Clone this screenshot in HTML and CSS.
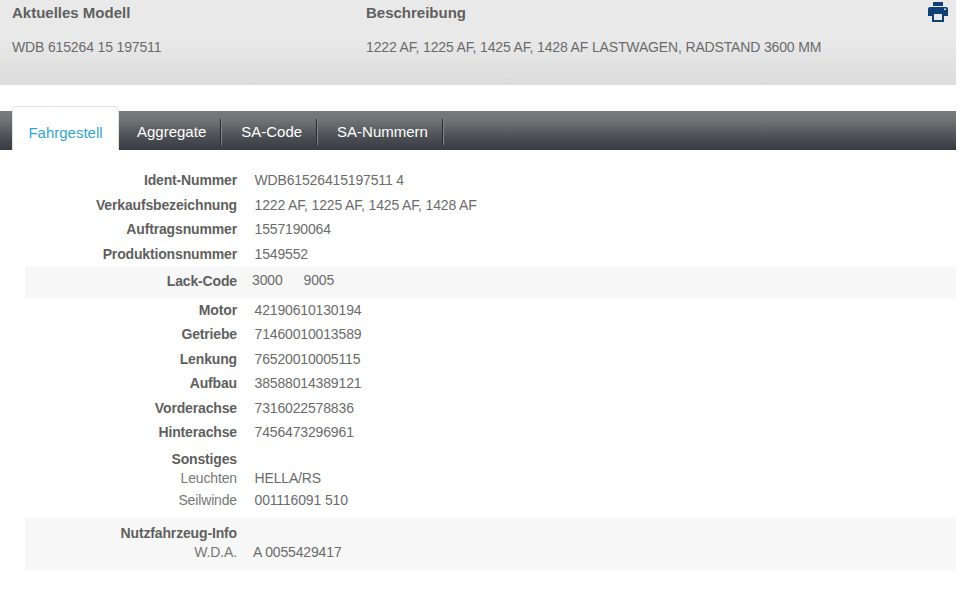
FILE: index.html
```html
<!DOCTYPE html>
<html lang="de">
<head>
<meta charset="utf-8">
<title>Fahrgestell</title>
<link rel="stylesheet" href="styles.css">
</head>
<body>
<div class="page">
  <header class="summary">
    <div class="col-model">
      <div class="sum-head">Aktuelles Modell</div>
      <div class="sum-val">WDB 615264 15 197511</div>
    </div>
    <div class="col-desc">
      <div class="sum-head">Beschreibung</div>
      <div class="sum-val">1222 AF, 1225 AF, 1425 AF, 1428 AF LASTWAGEN, RADSTAND 3600 MM</div>
    </div>
    <svg class="print" width="20" height="20" viewBox="0 0 20 20" aria-label="Drucken">
      <path fill="#0f3f73" d="M5 0h10v4H5z"/>
      <path fill="#0f3f73" d="M2 5h16a2 2 0 0 1 2 2v7h-4v-4H4v4H0V7a2 2 0 0 1 2-2z"/>
      <path fill="#0f3f73" d="M4 10h12v10H4z"/>
      <path fill="#e6e9ec" d="M6 12h8v6H6z"/>
      <path fill="#dfe5ea" d="M16 6.500h2V8h-2z"/>
    </svg>
  </header>

  <nav class="tabs">
    <a class="tab active">Fahrgestell</a>
    <a class="tab">Aggregate</a>
    <a class="tab">SA-Code</a>
    <a class="tab">SA-Nummern</a>
  </nav>

  <main class="details">
    <div class="group">
      <div class="row"><span class="k">Ident-Nummer</span><span class="v">WDB61526415197511 4</span></div>
      <div class="row"><span class="k">Verkaufsbezeichnung</span><span class="v">1222 AF, 1225 AF, 1425 AF, 1428 AF</span></div>
      <div class="row"><span class="k">Auftragsnummer</span><span class="v">1557190064</span></div>
      <div class="row"><span class="k">Produktionsnummer</span><span class="v">1549552</span></div>
    </div>
    <div class="group band lack">
      <div class="row"><span class="k">Lack-Code</span><span class="v codes"><span>3000</span><span>9005</span></span></div>
    </div>
    <div class="group parts">
      <div class="row"><span class="k">Motor</span><span class="v">42190610130194</span></div>
      <div class="row"><span class="k">Getriebe</span><span class="v">71460010013589</span></div>
      <div class="row"><span class="k">Lenkung</span><span class="v">76520010005115</span></div>
      <div class="row"><span class="k">Aufbau</span><span class="v">38588014389121</span></div>
      <div class="row"><span class="k">Vorderachse</span><span class="v">7316022578836</span></div>
      <div class="row"><span class="k">Hinterachse</span><span class="v">7456473296961</span></div>
    </div>
    <div class="group other">
      <div class="row sub-head"><span class="k">Sonstiges</span></div>
      <div class="row sub first-sub"><span class="k">Leuchten</span><span class="v">HELLA/RS</span></div>
      <div class="row sub"><span class="k">Seilwinde</span><span class="v">001116091 510</span></div>
    </div>
    <div class="group band info">
      <div class="row sub-head"><span class="k">Nutzfahrzeug-Info</span></div>
      <div class="row sub first-sub"><span class="k">W.D.A.</span><span class="v">A 0055429417</span></div>
    </div>
  </main>
</div>
</body>
</html>
```
FILE: styles.css
```css
html, body {
  margin: 0;
  padding: 0;
  background: #fff;
}
body {
  font-family: "Liberation Sans", Arial, sans-serif;
  font-size: 14px;
  letter-spacing: -0.15px;
  color: #666;
  overflow: hidden;
}
.page {
  width: 956px;
  height: 615px;
}
.summary {
  display: flex;
  height: 85px;
  box-sizing: border-box;
  padding: 2px 8px 0 12px;
  background: linear-gradient(#e9e9e9 0%, #e9e9e9 45%, #dcdcdc 100%);
}
.col-model { width: 354px; }
.col-desc { flex: 1; }
.sum-head {
  font-size: 15px;
  letter-spacing: 0;
  font-weight: bold;
  line-height: 22px;
  color: #5f5f5f;
}
.sum-val {
  margin-top: 14px;
  line-height: 18px;
  color: #6b6b6b;
}
.print { flex: none; }

.tabs {
  display: flex;
  height: 39px;
  margin-top: 26px;
  padding-left: 12px;
  background: linear-gradient(#777b7e 0%, #6e7275 25%, #4a4d52 70%, #383b43 100%);
}
.tab {
  position: relative;
  display: flex;
  align-items: center;
  padding: 2px 15px 0 18px;
  font-size: 15px;
  letter-spacing: 0;
  color: #fff;
  line-height: 37px;
  white-space: nowrap;
}
.tab::after {
  content: "";
  position: absolute;
  right: 0;
  top: 8px;
  bottom: 5px;
  width: 1px;
  background: #26282c;
  box-shadow: 1px 0 0 #85888b;
}
.tab:nth-child(3),
.tab:nth-child(4) { padding-left: 20px; }
.tab.active {
  height: 44px;
  margin-top: -5px;
  box-sizing: border-box;
  width: 107px;
  justify-content: center;
  color: #35a5cf;
  background: #fff;
  border: 1px solid #e2e2e2;
  border-bottom: 0;
  border-radius: 5px 5px 0 0;
  padding: 7px 0 0;
}
.tab.active::after { display: none; }

.details {
  padding: 18px 0 0 25px;
}
.row {
  display: flex;
  height: 24.5px;
  line-height: 24.5px;
}
.k {
  width: 212px;
  text-align: right;
  font-weight: bold;
  color: #5f5f5f;
}
.v {
  margin-left: 17.5px;
  color: #6b6b6b;
}
.band { background: #f7f7f7; }
.lack {
  height: 32px;
}
.lack .row {
  height: 32px;
  line-height: 30px;
}
.codes {
  display: flex;
  gap: 21px;
  margin-left: 15px;
  line-height: 28px;
}
.parts { margin-top: -0.3px; }
.sub .k { font-weight: normal; color: #777; }
.other { padding: 2.300px 0 5px; margin-top: 2px; }
.other .sub-head { height: 20px; line-height: 20px; }
.other .first-sub { height: 19px; line-height: 19px; }
.other .first-sub + .sub { height: 25px; line-height: 25px; }
.info { height: 52px; padding-top: 5px; box-sizing: border-box; }
.info .sub-head { height: 20px; line-height: 20px; }
.info .first-sub { height: 18px; line-height: 18px; }
.info .v { margin-left: 16px; }
```
